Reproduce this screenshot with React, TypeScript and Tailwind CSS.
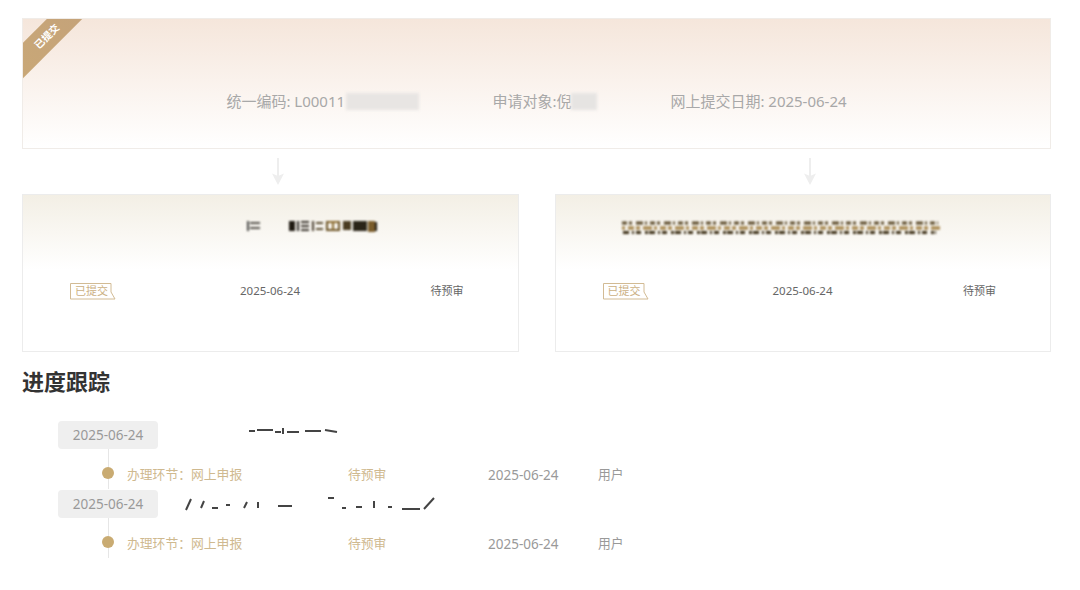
const fontStack = '[font-family:"Noto_Sans","Noto_Sans_CJK_SC",sans-serif]';

function Patch({ className }: { className: string }) {
  return <span className={`inline-block blur-[1.5px] ${className}`} />;
}

// redacted titles in the reference are pixel smears
function SmearShort() {
  const bars: [number, number, number, number, string][] = [
    [0, 2, 2, 10, '#4a4a48'],
    [3, 3, 10, 2, '#55524c'],
    [3, 8, 10, 2, '#55524c'],
    [42, 2, 6, 10, '#1f1a12'],
    [50, 2, 2, 10, '#2d2a24'],
    [54, 2, 8, 2, '#3a362e'],
    [54, 6, 8, 2, '#3a362e'],
    [54, 10, 8, 2, '#3a362e'],
    [65, 2, 2, 10, '#4a4030'],
    [69, 3, 7, 2, '#5a4c30'],
    [69, 9, 7, 2, '#5a4c30'],
    [79, 2, 14, 2, '#8a6a2e'],
    [79, 10, 14, 2, '#6a5224'],
    [79, 2, 2, 10, '#6a5224'],
    [85, 4, 2, 7, '#8a6a2e'],
    [91, 2, 2, 10, '#6a5224'],
    [96, 2, 8, 9, '#4a3c22'],
    [106, 2, 14, 10, '#2a2418'],
    [121, 2, 7, 11, '#7a5c2a'],
    [128, 3, 2, 9, '#1f1a12'],
  ];
  return (
    <svg width="131" height="15" viewBox="0 0 131 15" className="blur-[0.8px]">
      {bars.map(([x, y, w, h, fill], i) => (
        <rect key={i} x={x} y={y} width={w} height={h} fill={fill} />
      ))}
    </svg>
  );
}

function SmearLong() {
  return (
    <svg width="318" height="16" viewBox="0 0 318 16" className="blur-[0.9px]">
      <line x1="0" y1="3" x2="316" y2="3" stroke="#5c4a2a" strokeWidth="3" strokeDasharray="5 2 3 4 7 2 2 3" />
      <line x1="0" y1="8" x2="318" y2="8" stroke="#a98a52" strokeWidth="3.5" strokeDasharray="3 3 6 2 4 3 9 2" />
      <line x1="1" y1="12.5" x2="314" y2="12.5" stroke="#3f3219" strokeWidth="3" strokeDasharray="6 3 2 2 5 4 3 1" />
    </svg>
  );
}

function Arrow() {
  return (
    <svg width="14" height="27" viewBox="0 0 14 27" className="blur-[0.3px]">
      <path d="M7 0V18" stroke="#eeeeee" strokeWidth="2" />
      <path d="M1 15.5L7 27L13 15.5L7 18Z" fill="#eeeeee" />
    </svg>
  );
}

function Tag() {
  return (
    <div className="relative flex h-[16px] w-[45px] items-center justify-center pr-[2px] text-[11px] text-[#cbb083]">
      <svg width="46" height="17" viewBox="0 0 46 17" className="absolute left-0 top-0">
        <path d="M.5.5H41V9L45 16H.5Z" fill="none" stroke="#d2bb94" />
      </svg>
      已提交
    </div>
  );
}

function SubCard({ title, titlePad }: { title: React.ReactNode; titlePad: string }) {
  return (
    <div className="h-[158px] border border-[#ececec] bg-gradient-to-b from-[#f3efe5] to-white to-[48%]">
      <div className={`flex h-[60px] items-end ${titlePad}`}>{title}</div>
      <div className="mt-[28px] flex h-[16px] items-center pl-[47px] pr-[54px] text-[11px] text-[#666]">
        <Tag />
        <span className="ml-[125px] text-[11.5px]">2025-06-24</span>
        <span className="ml-auto">待预审</span>
      </div>
    </div>
  );
}

function Step({ date, smear }: { date: string; smear: React.ReactNode }) {
  return (
    <div>
      <div className="flex h-[28px] items-center">
        <div className="ml-[36px] flex h-[28px] w-[100px] items-center justify-center rounded bg-[#efefef] text-[13.5px] text-[#999]">
          {date}
        </div>
        {smear}
      </div>
      <div className="relative ml-[86px] flex h-[40px] items-center border-l border-[#e6e6e6] pl-[18px] pt-[12px] text-[12.8px]">
        <span className="absolute left-[-7px] top-[18px] h-[12px] w-[12px] rounded-full bg-[#c9ab72]" />
        <span className="w-[221px] text-[#cfb98f]">办理环节：网上申报</span>
        <span className="w-[140px] text-[#cfb98f]">待预审</span>
        <span className="w-[110px] text-[13.5px] text-[#999]">2025-06-24</span>
        <span className="text-[#999]">用户</span>
      </div>
    </div>
  );
}

export default function App() {
  return (
    <div className={`h-[590px] w-[1080px] overflow-hidden bg-white pl-[22px] pr-[29px] pt-[18px] ${fontStack}`}>
      {/* top summary */}
      <div className="relative h-[131px] overflow-hidden border border-[#f0ece8] bg-gradient-to-b from-[#f5e6db] to-white">
        <div className="absolute left-[-31px] top-[5px] flex h-[25px] w-[110px] -rotate-45 items-center justify-center bg-gradient-to-r from-[#c9a877] to-[#c4a27a] text-[10px] font-bold text-white">
          已提交
        </div>
        <div className="flex h-full items-center justify-center gap-[73px] pt-[35px] text-[15px] text-[#a8a8a8]">
          <span className="flex w-[193px] items-center whitespace-nowrap">
            统一编码: L00011
            <Patch className="ml-[1px] h-[17px] w-[74px] bg-[#e8e5e3]" />
          </span>
          <span className="flex w-[105px] items-center whitespace-nowrap">
            申请对象:倪
            <Patch className="h-[17px] w-[27px] bg-[#e6e4e2]" />
          </span>
          <span className="whitespace-nowrap">网上提交日期: 2025-06-24</span>
        </div>
      </div>

      {/* arrows */}
      <div className="grid h-[45px] grid-cols-2 gap-[36px]">
        <div className="ml-[249px] pt-[9px]">
          <Arrow />
        </div>
        <div className="ml-[248px] pt-[9px]">
          <Arrow />
        </div>
      </div>

      {/* sub items */}
      <div className="grid grid-cols-2 gap-[36px]">
        <SubCard title={<SmearShort />} titlePad="pl-[224px] pb-[21px]" />
        <SubCard title={<SmearLong />} titlePad="pl-[66px] pb-[19px]" />
      </div>

      {/* progress */}
      <h2 className="mt-[16px] text-[22px] font-bold leading-[26px] text-[#333]">进度跟踪</h2>
      <div className="mt-[27px] flex flex-col gap-[1px]">
        <Step
          date="2025-06-24"
          smear={
            <svg width="90" height="14" viewBox="0 0 90 14" className="mb-[8px] ml-[91px] blur-[0.7px]">
              <path d="M0 7H6M8 6H24M26 8H32M34 4V10M38 8H50M56 7H72M76 6L88 8" stroke="#444" strokeWidth="2" fill="none" />
            </svg>
          }
        />
        <Step
          date="2025-06-24"
          smear={
            <svg width="258" height="16" viewBox="0 0 258 16" className="ml-[26px] blur-[0.6px]">
              <path d="M2 14L7 3M17 12L20 5M28 12H34M42 9H46M60 12L63 6M74 12V6M94 10H108M144 2H150M158 12H162M172 11H178M190 12V5M204 11H208M218 13H236M240 13L250 2" stroke="#444" strokeWidth="2" fill="none" />
            </svg>
          }
        />
      </div>
    </div>
  );
}
